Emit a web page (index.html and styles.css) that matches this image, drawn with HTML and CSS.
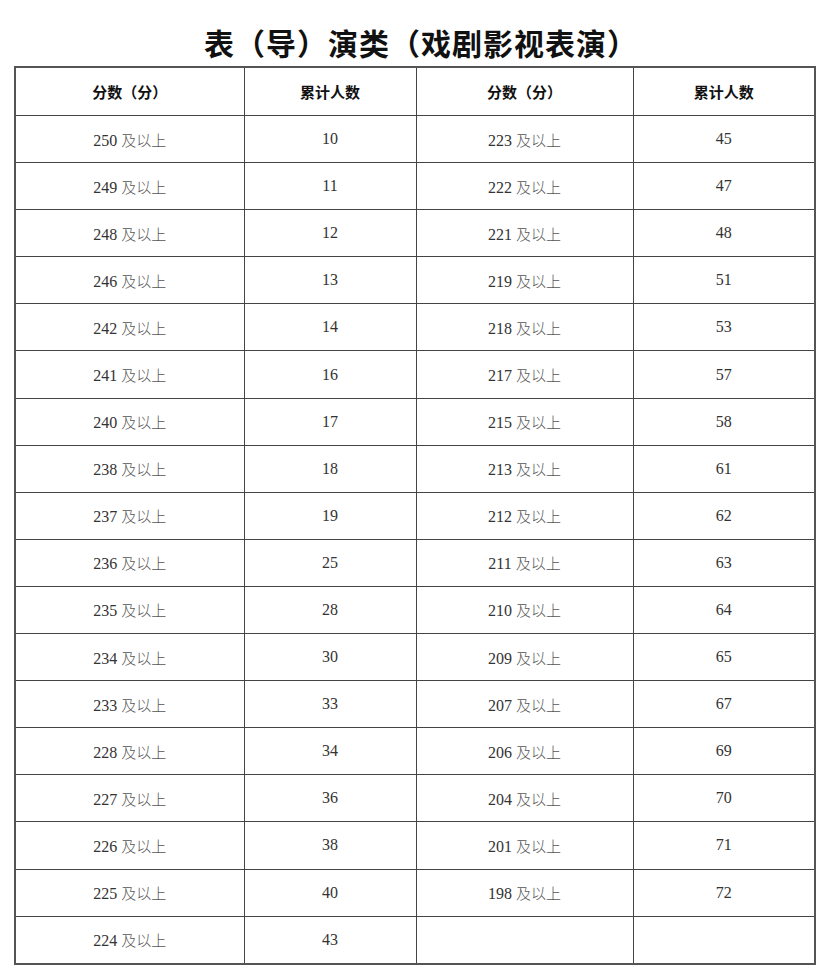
FILE: index.html
```html
<!DOCTYPE html>
<html lang="zh">
<head>
<meta charset="utf-8">
<link rel="stylesheet" href="styles.css">
</head>
<body>
<h1 class="title">表（导）演类（戏剧影视表演）</h1>
<table class="grid">
<colgroup><col class="c1"><col class="c2"><col class="c3"><col class="c4"></colgroup>
<thead>
<tr><th>分数（分）</th><th>累计人数</th><th>分数（分）</th><th>累计人数</th></tr>
</thead>
<tbody>
<tr><td>250 <span class="cj">及以上</span></td><td>10</td><td>223 <span class="cj">及以上</span></td><td>45</td></tr>
<tr><td>249 <span class="cj">及以上</span></td><td>11</td><td>222 <span class="cj">及以上</span></td><td>47</td></tr>
<tr><td>248 <span class="cj">及以上</span></td><td>12</td><td>221 <span class="cj">及以上</span></td><td>48</td></tr>
<tr><td>246 <span class="cj">及以上</span></td><td>13</td><td>219 <span class="cj">及以上</span></td><td>51</td></tr>
<tr><td>242 <span class="cj">及以上</span></td><td>14</td><td>218 <span class="cj">及以上</span></td><td>53</td></tr>
<tr><td>241 <span class="cj">及以上</span></td><td>16</td><td>217 <span class="cj">及以上</span></td><td>57</td></tr>
<tr><td>240 <span class="cj">及以上</span></td><td>17</td><td>215 <span class="cj">及以上</span></td><td>58</td></tr>
<tr><td>238 <span class="cj">及以上</span></td><td>18</td><td>213 <span class="cj">及以上</span></td><td>61</td></tr>
<tr><td>237 <span class="cj">及以上</span></td><td>19</td><td>212 <span class="cj">及以上</span></td><td>62</td></tr>
<tr><td>236 <span class="cj">及以上</span></td><td>25</td><td>211 <span class="cj">及以上</span></td><td>63</td></tr>
<tr><td>235 <span class="cj">及以上</span></td><td>28</td><td>210 <span class="cj">及以上</span></td><td>64</td></tr>
<tr><td>234 <span class="cj">及以上</span></td><td>30</td><td>209 <span class="cj">及以上</span></td><td>65</td></tr>
<tr><td>233 <span class="cj">及以上</span></td><td>33</td><td>207 <span class="cj">及以上</span></td><td>67</td></tr>
<tr><td>228 <span class="cj">及以上</span></td><td>34</td><td>206 <span class="cj">及以上</span></td><td>69</td></tr>
<tr><td>227 <span class="cj">及以上</span></td><td>36</td><td>204 <span class="cj">及以上</span></td><td>70</td></tr>
<tr><td>226 <span class="cj">及以上</span></td><td>38</td><td>201 <span class="cj">及以上</span></td><td>71</td></tr>
<tr><td>225 <span class="cj">及以上</span></td><td>40</td><td>198 <span class="cj">及以上</span></td><td>72</td></tr>
<tr><td>224 <span class="cj">及以上</span></td><td>43</td><td></td><td></td></tr>
</tbody>
</table>
</body>
</html>
```
FILE: styles.css
```css
html, body {
  margin: 0;
  padding: 0;
  background: #fff;
}
body {
  padding: 0 7px 0 14px;
}
.title {
  margin: 0;
  height: 66px;
  line-height: 84px;
  text-align: center;
  font-family: "Noto Sans CJK SC", sans-serif;
  font-weight: 700;
  font-size: 30px;
  color: #111;
  letter-spacing: 1px;
  padding-left: 14px;
}
.grid {
  border-collapse: collapse;
  width: 800px;
  table-layout: fixed;
  border: 2px solid #555;
}
.c1 { width: 229px; }
.c2 { width: 172px; }
.c3 { width: 217px; }
.c4 { width: 182px; }
.grid th, .grid td {
  border: 1px solid #444;
  height: 46.1px;
  padding: 0;
  text-align: center;
  vertical-align: middle;
}
.grid th {
  font-family: "Noto Sans CJK SC", sans-serif;
  font-weight: 700;
  font-size: 15px;
  color: #111;
  height: 47px;
}
.grid td {
  font-family: "Liberation Serif", "Noto Sans CJK SC", serif;
  font-size: 16px;
  color: #333;
}
.cj {
  font-family: "Noto Sans CJK SC", sans-serif;
  font-weight: 300;
  font-size: 15px;
  color: #555;
}
```
